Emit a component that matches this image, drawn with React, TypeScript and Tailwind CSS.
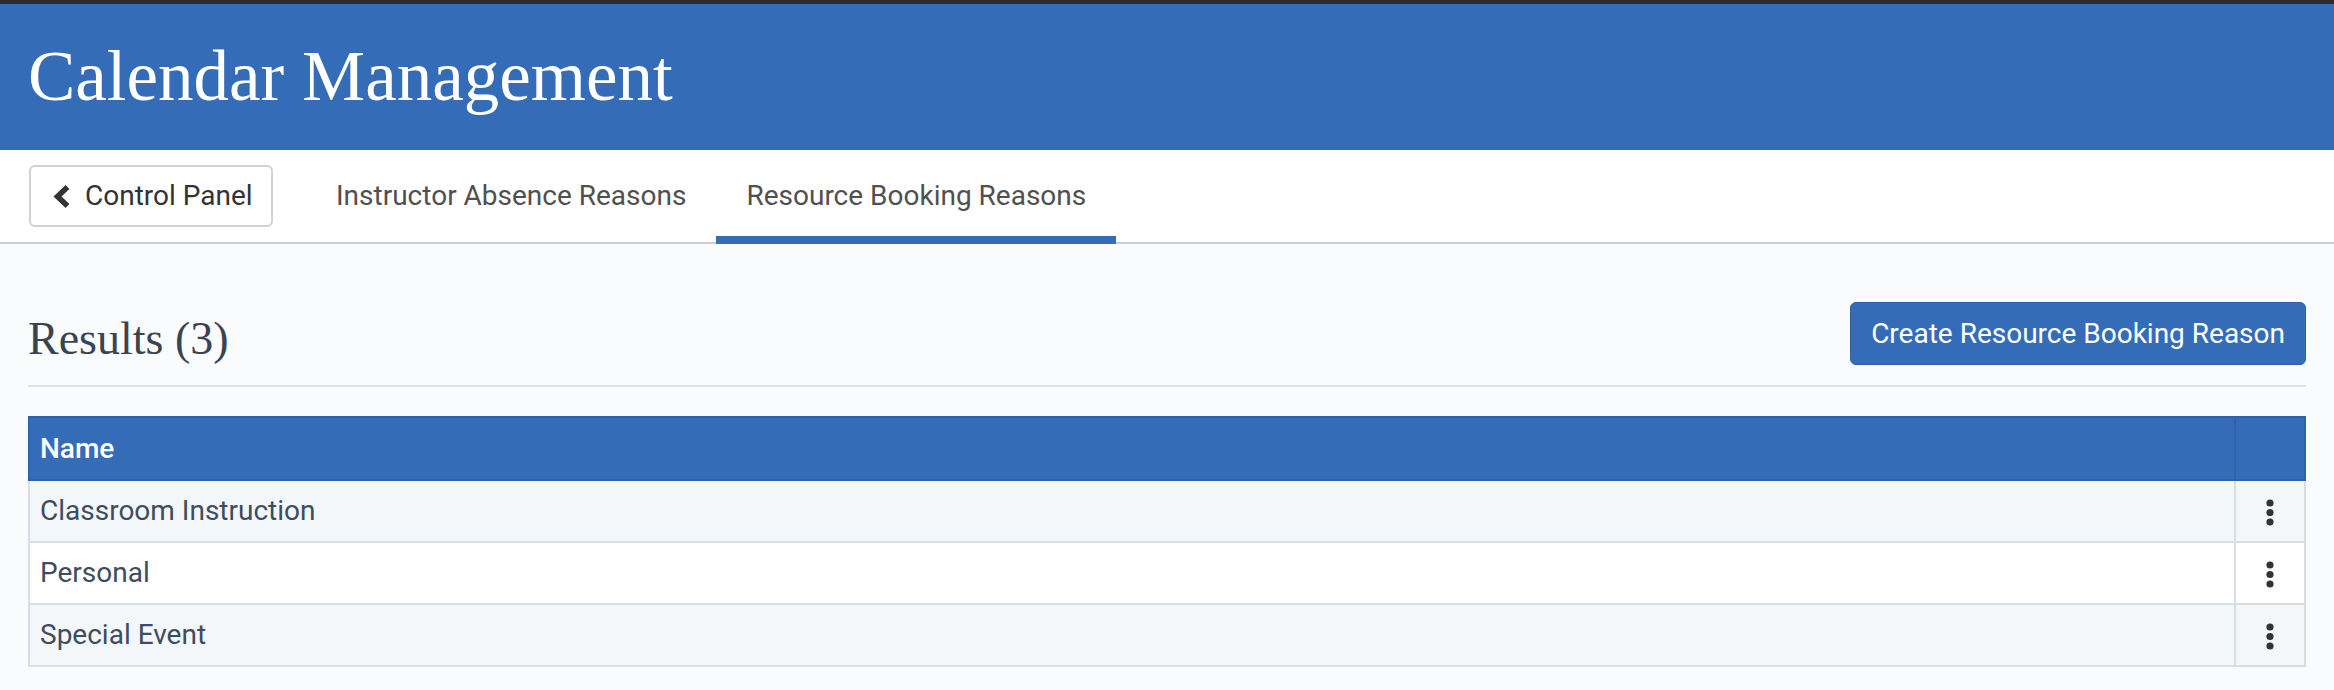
import React from 'react';

interface Reason {
  id: number;
  name: string;
}

const reasons: Reason[] = [
  { id: 1, name: 'Classroom Instruction' },
  { id: 2, name: 'Personal' },
  { id: 3, name: 'Special Event' },
];

const tabs = ['Instructor Absence Reasons', 'Resource Booking Reasons'];

function ChevronLeft() {
  return (
    <svg width="17" height="23" viewBox="0 0 17 23" aria-hidden="true">
      <polyline points="14.5,2 4.5,11.5 14.5,21" fill="none" stroke="#333" strokeWidth="5.5" strokeLinejoin="miter" />
    </svg>
  );
}

function Kebab() {
  return (
    <svg width="8" height="27" viewBox="0 0 8 27" aria-hidden="true">
      <circle cx="4" cy="4" r="3.6" fill="#333" />
      <circle cx="4" cy="13.5" r="3.6" fill="#333" />
      <circle cx="4" cy="23" r="3.6" fill="#333" />
    </svg>
  );
}

export default function App() {
  const activeTab = 'Resource Booking Reasons';

  return (
    <div className="min-h-[690px] bg-[#f9fbfd] font-['Roboto',sans-serif]">
      <div className="h-1 bg-[#2c2c2e]" />

      {/* Header */}
      <header className="h-[146px] bg-[#346cb8] px-7 pt-[37px]">
        <h1 className="font-['Liberation_Serif',serif] text-[71px] leading-none text-white">Calendar Management</h1>
      </header>

      {/* Tabs */}
      <nav className="flex h-[94px] items-stretch border-b-2 border-[#cfcfcf] bg-white pl-[29px]">
        <button className="mr-[33px] flex h-[62px] w-[244px] items-center gap-[15px] self-center rounded-md border-2 border-[#d2d2d2] bg-white pl-[22px] text-[28px] text-[#333]">
          <ChevronLeft />
          <span>Control Panel</span>
        </button>
        {tabs.map((tab) => (
          <div
            key={tab}
            className={`-mb-[2px] flex items-center border-b-[8px] px-[30px] pt-[6px] text-[28px] text-[#505050] ${
              tab === activeTab ? 'border-[#346cb8]' : 'border-transparent'
            }`}
          >
            {tab}
          </div>
        ))}
      </nav>

      {/* Content */}
      <main className="px-7">
        <div className="mt-[58px] flex items-center justify-between">
          <h2 className="mt-[10px] font-['Liberation_Serif',serif] text-[46px] leading-none text-[#3a4450]">Results (3)</h2>
          <button className="h-[63px] rounded-[6px] border border-[#2d5fa6] bg-[#346cb8] px-[20px] text-[28px] text-white">
            Create Resource Booking Reason
          </button>
        </div>
        <div className="mt-[20px] border-b-2 border-[#dde3e9]" />

        <table className="mt-[29px] w-full border-collapse text-[28px]">
          <thead>
            <tr className="h-[63px] bg-[#346cb8] text-left text-white">
              <th className="border-2 border-[#2e62aa] pl-[10px] font-medium">Name</th>
              <th className="w-[70px] border-2 border-[#2e62aa]" />
            </tr>
          </thead>
          <tbody>
            {reasons.map((r, i) => (
              <tr key={r.id} className={`h-[62px] ${i % 2 === 0 ? 'bg-[#f3f7fa]' : 'bg-white'}`}>
                <td className="border-2 border-[#d7dee5] pl-[10px] text-[#3e4c5e]">{r.name}</td>
                <td className="border-2 border-[#dcdcdc] text-center">
                  <span className="inline-flex align-middle">
                    <Kebab />
                  </span>
                </td>
              </tr>
            ))}
          </tbody>
        </table>
      </main>
    </div>
  );
}
